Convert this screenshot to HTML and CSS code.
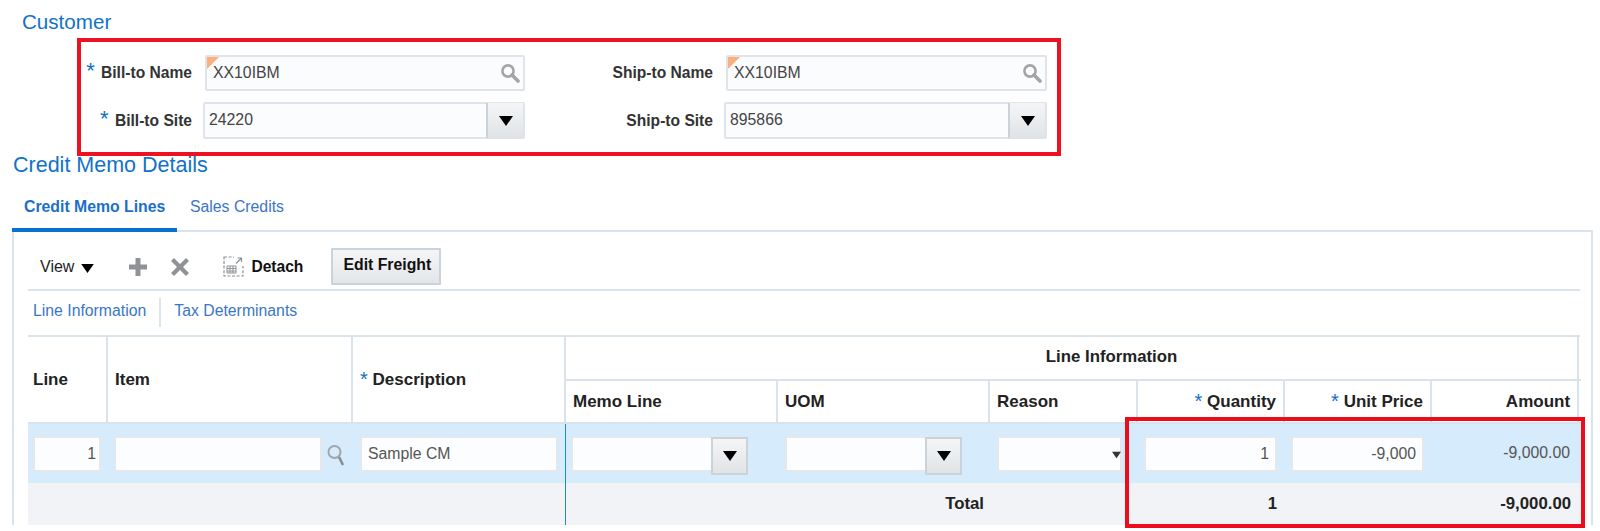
FILE: index.html
```html
<!DOCTYPE html>
<html lang="en">
<head>
<meta charset="utf-8">
<title>Credit Memo</title>
<link rel="stylesheet" href="styles.css">
</head>
<body>
<svg class="defs" width="0" height="0" aria-hidden="true">
  <symbol id="arrow" viewBox="0 0 14 10"><path d="M0 0H14L7 10Z"/></symbol>
  <symbol id="lens" viewBox="0 0 20 20"><circle cx="8" cy="8" r="5.6" fill="none" stroke="#a3a5a7" stroke-width="2.6"/><path d="M12 12L18 18" stroke="#a3a5a7" stroke-width="3.6" stroke-linecap="round"/></symbol>
  <symbol id="lens-thin" viewBox="0 0 18 24"><circle cx="7.5" cy="8" r="6" fill="none" stroke="#a2a6a9" stroke-width="2"/><path d="M12 13L16 21" stroke="#8b8f93" stroke-width="2.6"/></symbol>
</svg>

<h2 class="section-title customer">Customer</h2>

<section class="customer-form">
  <label class="form-label name-row"><span class="req">*</span> Bill-to Name</label>
  <div class="field lov"><i class="flag"></i><span>XX10IBM</span><svg class="lens"><use href="#lens"/></svg></div>
  <label class="form-label name-row">Ship-to Name</label>
  <div class="field lov"><i class="flag"></i><span>XX10IBM</span><svg class="lens"><use href="#lens"/></svg></div>
  <label class="form-label"><span class="req">*</span> Bill-to Site</label>
  <div class="field select"><span>24220</span><b class="drop"><svg class="arrow"><use href="#arrow"/></svg></b></div>
  <label class="form-label">Ship-to Site</label>
  <div class="field select"><span>895866</span><b class="drop"><svg class="arrow"><use href="#arrow"/></svg></b></div>
</section>

<h2 class="section-title details">Credit Memo Details</h2>

<nav class="tabs">
  <a class="tab active">Credit Memo Lines</a>
  <a class="tab">Sales Credits</a>
</nav>

<main class="panel">
  <div class="toolbar">
    <span class="view">View</span>
    <svg class="view-arrow"><use href="#arrow"/></svg>
    <svg class="tool plus" viewBox="0 0 20 20"><path d="M7.5 1H12.5V7.5H19V12.5H12.5V19H7.5V12.5H1V7.5H7.5Z" fill="#8f9397"/></svg>
    <svg class="tool cross" viewBox="0 0 20 20"><path d="M4 1L10 7L16 1L19 4L13 10L19 16L16 19L10 13L4 19L1 16L7 10L1 4Z" fill="#8f9397"/></svg>
    <svg class="tool detach" viewBox="0 0 21 21" fill="none">
      <rect x="1" y="1" width="19" height="19" stroke="#8d9195" stroke-width="1.2" stroke-dasharray="3 1.6"/>
      <rect x="11" y="0" width="10" height="10" fill="#fff"/>
      <path d="M13 7.5L18.5 2M14.5 2H18.5V6" stroke="#8d9195" stroke-width="1.2"/>
      <path d="M4 10H13V17H4ZM4 12.5H13M4 15H13M7 10V17M10 10V17" stroke="#8d9195" stroke-width="1"/>
    </svg>
    <span class="detach-label">Detach</span>
    <button class="btn">Edit Freight</button>
  </div>

  <div class="links">
    <a class="link">Line Information</a>
    <i class="link-sep"></i>
    <a class="link">Tax Determinants</a>
  </div>

  <table class="lines">
    <colgroup>
      <col class="c-line"><col class="c-item"><col class="c-desc"><col class="c-memo"><col class="c-uom">
      <col class="c-reason"><col class="c-num"><col class="c-num"><col class="c-num"><col class="c-end">
    </colgroup>
    <thead>
      <tr class="head-1">
        <th rowspan="2" class="line-head">Line</th>
        <th rowspan="2">Item</th>
        <th rowspan="2"><span class="req">*</span> Description</th>
        <th colspan="6" class="center group">Line Information</th>
        <th class="end"></th>
      </tr>
      <tr class="head-2">
        <th>Memo Line</th>
        <th>UOM</th>
        <th>Reason</th>
        <th class="right"><span class="req">*</span> Quantity</th>
        <th class="right"><span class="req">*</span> Unit Price</th>
        <th class="right">Amount</th>
        <th class="end"></th>
      </tr>
    </thead>
    <tbody>
      <tr class="data">
        <td class="line-cell"><div class="cell-input right-text">1</div></td>
        <td class="item-cell"><div class="item-wrap"><div class="cell-input grow"></div><svg class="lens-thin"><use href="#lens-thin"/></svg></div></td>
        <td class="split"><div class="cell-input">Sample CM</div></td>
        <td class="memo-cell"><div class="cell-input has-drop"><b class="drop"><svg class="arrow"><use href="#arrow"/></svg></b></div></td>
        <td class="uom-cell"><div class="cell-input has-drop"><b class="drop"><svg class="arrow"><use href="#arrow"/></svg></b></div></td>
        <td><div class="reason-wrap"><div class="cell-input grow"></div><svg class="mini-arrow"><use href="#arrow"/></svg></div></td>
        <td class="num-cell"><div class="cell-input right-text">1</div></td>
        <td class="num-cell"><div class="cell-input right-text">-9,000</div></td>
        <td class="amount">-9,000.00</td>
        <td></td>
      </tr>
      <tr class="total">
        <td class="split" colspan="3"></td>
        <td colspan="3"><span class="total-label">Total</span></td>
        <td class="right">1</td>
        <td></td>
        <td class="right">-9,000.00</td>
        <td></td>
      </tr>
    </tbody>
  </table>
</main>

<div class="callout"></div>
</body>
</html>
```

FILE: styles.css
```css
* { box-sizing: border-box; }
html, body { margin: 0; padding: 0; }
body {
  position: relative;
  width: 1600px;
  height: 531px;
  overflow: hidden;
  background: #fff;
  font-family: "Liberation Sans", Arial, sans-serif;
  color: #333;
}
.defs { position: absolute; }

.section-title { margin: 0; font-weight: 400; color: #1272c9; }
.customer { padding: 10px 0 0 22px; height: 38px; font-size: 20.6px; line-height: 23px; }
.details { margin-left: 13px; height: 19px; font-size: 21.5px; line-height: 18px; }

.customer-form {
  margin-left: 77px;
  width: 984px;
  height: 118px;
  border: 4px solid #ec1221;
  padding-top: 13px;
  display: grid;
  grid-template-columns: 111px 333px 188px 334px;
  grid-template-rows: 36px 37px;
  row-gap: 11px;
  align-items: center;
}
.form-label { font-size: 15.6px; font-weight: 700; text-align: right; color: #333; }
.form-label.name-row { padding-top: 0; }
.req {
  display: inline-block;
  margin-right: 2px;
  color: #0f6fc6;
  font-weight: 400;
  font-size: 22px;
  line-height: 0;
  vertical-align: 0;
}

.field {
  position: relative;
  height: 100%;
  margin-left: 11px;
  display: flex;
  align-items: center;
  border: 2px solid #dfe4ea;
  border-radius: 2px;
  background: #fbfcfe;
  font-size: 15.8px;
  color: #444;
}
.field.lov { margin-left: 13px; padding-left: 6px; }
.field.select { padding-left: 4px; padding-bottom: 1px; }
.flag {
  position: absolute;
  left: 0;
  top: 0;
  width: 0;
  height: 0;
  border-top: 12px solid #fbb07c;
  border-right: 12px solid transparent;
}
.lens { position: absolute; right: 3px; top: 6px; width: 20px; height: 20px; }
.drop {
  display: flex;
  align-items: center;
  justify-content: center;
  width: 37px;
  align-self: stretch;
  margin-left: auto;
  border-left: 2px solid #cbd3da;
  background: linear-gradient(#f4f5f7, #e0e4e7);
}
.arrow { width: 14px; height: 10px; fill: #000; }
.field .drop { margin-top: -1px; margin-bottom: -2px; }

.tabs {
  margin-left: 12px;
  width: 1581px;
  height: 57px;
  display: flex;
  border-bottom: 2px solid #d9e3ec;
}
.tab {
  height: 57px;
  padding: 22px 12px 0;
  font-size: 15.8px;
  line-height: 20px;
  white-space: nowrap;
  color: #3a76c6;
}
.tab.active {
  width: 165px;
  font-weight: 700;
  color: #1a6fc9;
  border-bottom: 4px solid #0572ce;
}
.tab:not(.active) { padding-left: 13px; }

.panel {
  margin-left: 12px;
  width: 1581px;
  height: 293px;
  border-left: 2px solid #d9e3ec;
  border-right: 2px solid #d9e3ec;
  padding-left: 14px;
}

.toolbar {
  width: 1552px;
  height: 59px;
  padding: 12px 0 0 12px;
  display: flex;
  align-items: center;
  border-bottom: 2px solid #d9e3ec;
}
.view { font-size: 16px; color: #222; }
.view-arrow { width: 13px; height: 9px; margin: 4px 0 0 7px; fill: #000; }
.tool { flex: none; }
.plus { width: 20px; height: 20px; margin-left: 34px; }
.cross { width: 20px; height: 20px; margin-left: 22px; }
.detach { width: 21px; height: 21px; margin-left: 33px; }
.detach-label { margin-left: 7px; font-size: 15.6px; font-weight: 700; color: #111; }
.btn {
  margin-left: 28px;
  width: 110px;
  height: 37px;
  padding: 0 0 3px 2px;
  border: 2px solid #cbd3da;
  border-radius: 1px;
  background: linear-gradient(#f4f5f7, #e3e6e9);
  font: 700 15.8px "Liberation Sans", Arial, sans-serif;
  color: #111;
}

.links {
  width: 1552px;
  height: 46px;
  padding: 0 0 5px 5px;
  display: flex;
  align-items: center;
  border-bottom: 2px solid #d9e3ec;
}
.link { font-size: 15.8px; color: #3a76c6; }
.link-sep { width: 2px; height: 29px; margin: 4px 13px 0 13px; background: #dde5ec; }

.lines {
  border-collapse: separate;
  border-spacing: 0;
  table-layout: fixed;
  width: 1553px;
}
.c-line { width: 80px; }
.c-item { width: 245px; }
.c-desc { width: 213px; }
.c-memo { width: 212px; }
.c-uom { width: 212px; }
.c-reason { width: 148px; }
.c-num { width: 147px; }
.c-end { width: 2px; }

th {
  padding: 0 7px;
  font-size: 17px;
  font-weight: 700;
  text-align: left;
  color: #222;
  border-right: 2px solid #d9e3ec;
  border-bottom: 2px solid #d9e3ec;
}
th.line-head { padding-left: 5px; }
th .req { margin-right: 0; font-size: 20px; vertical-align: -1px; }
th.center { text-align: center; }
th.right { text-align: right; }
th.group { padding: 0 0 3px 80px; font-size: 16.8px; }
th.end { padding: 0; border-right: 0; }
.head-1 { height: 44px; }
.head-2 { height: 43px; }

td { padding: 0 7px; }
.data { height: 59px; background: #d6ebfc; }
.total { height: 42px; background: #f2f3f7; font-size: 16.8px; font-weight: 700; color: #222; }
.total .right { padding-right: 8px; text-align: right; }
.total-label { display: block; padding-right: 147px; text-align: right; }
td.split { border-right: 1px solid #1b8dc2; }
td.line-cell { padding-left: 5px; }
td.line-cell .cell-input { padding-right: 3px; }
td.item-cell { padding-left: 6px; }
td.memo-cell { padding-left: 5px; }
td.uom-cell { padding-left: 7px; }
td.num-cell { padding: 0 8px 0 6px; }
td.amount { padding: 0 9px 2px 0; text-align: right; font-size: 15.8px; color: #555; }

.cell-input {
  position: relative;
  height: 36px;
  padding: 0 6px;
  display: flex;
  align-items: center;
  border: 2px solid #e4e8ec;
  border-radius: 1px;
  background: #fcfdfe;
  font-size: 15.8px;
  color: #555;
}
.right-text { justify-content: flex-end; }
.has-drop { width: 177px; padding: 0; }
.has-drop .drop { height: 38px; margin: -1px -2px -1px auto; border: 2px solid #cbd3da; }
.item-wrap, .reason-wrap { display: flex; align-items: center; }
.grow { flex: 1; }
.lens-thin { flex: none; width: 18px; height: 24px; margin: 4px 0 0 5px; }
.item-wrap { margin-right: -7px; padding-right: 8px; }
.reason-wrap { position: relative; width: 125px; }
.mini-arrow { position: absolute; right: 1px; top: 15px; width: 9px; height: 8px; fill: #333; }

.callout {
  position: absolute;
  left: 1125px;
  top: 417px;
  width: 460px;
  height: 111px;
  border: 4px solid #ec0d1c;
  pointer-events: none;
}
```
